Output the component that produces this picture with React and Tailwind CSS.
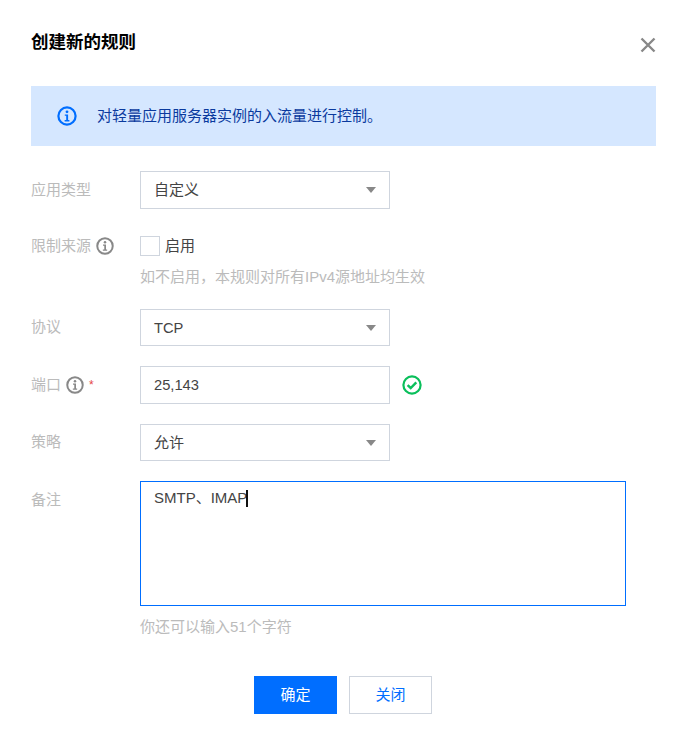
function InfoIcon ({ className }) {
  return (
    <svg className={className} viewBox="0 0 20 20" fill="none">
      <circle cx="10" cy="10" r="8.6" stroke="currentColor" strokeWidth="2.2" />
      <circle cx="10" cy="5.8" r="1.4" fill="currentColor" />
      <path d="M7.8 8.4h3.3v5.6h1.3v1.4H7.6V14h1.6V9.8H7.8z" fill="currentColor" />
    </svg>
  );
}

function Label (props) {
  return (
    <div className={`w-[109px] shrink-0 flex items-center text-[#bbbbbb] ${props.className || ''}`}>
      {props.children}
    </div>
  );
}

function Select (props) {
  return (
    <div className={`w-[250px] ${props.className} border border-[#cfd5de] flex items-center justify-between px-[13px] text-[#444444]`}>
      <span>{props.value}</span>
      <span className="w-0 h-0 border-x-[5px] border-x-transparent border-t-[6px] border-t-[#888888]" />
    </div>
  );
}

function App () {
  return (
    <div className="w-[683px] h-[741px] bg-white pl-[31px] pr-[27px] text-[15px] font-['Liberation_Sans','Noto_Sans_CJK_SC',sans-serif]">
      <div className="flex justify-between h-[86px] pt-[30px]">
        <p className="text-[17.5px] leading-[24px] font-bold text-black">创建新的规则</p>
        <svg className="w-[16px] h-[16px] mt-[7px] text-[#888888]" viewBox="0 0 16 16" fill="none">
          <path d="M1.5 1.5l13 13M14.5 1.5l-13 13" stroke="currentColor" strokeWidth="2.4" />
        </svg>
      </div>

      <div className="h-[60px] bg-[#d5e7ff] flex items-center pl-[26px] text-[#0a3a9e]">
        <InfoIcon className="w-[20px] h-[20px] text-[#006eff] mr-[20px]" />
        <span>对轻量应用服务器实例的入流量进行控制。</span>
      </div>

      <div className="mt-[25px] flex">
        <Label className="h-[38px]">应用类型</Label>
        <Select className="h-[38px]" value="自定义" />
      </div>

      <div className="mt-[27px] flex">
        <Label className="h-[20px]">
          限制来源
          <InfoIcon className="w-[18px] h-[18px] text-[#888888] ml-[5px]" />
        </Label>
        <div>
          <div className="flex items-center h-[20px] text-[#444444]">
            <span className="w-[20px] h-[20px] border border-[#cfd5de] mr-[5px]" />
            启用
          </div>
          <p className="mt-[11px] leading-[20px] text-[#bbbbbb]">如不启用，本规则对所有IPv4源地址均生效</p>
        </div>
      </div>

      <div className="mt-[22px] flex">
        <Label className="h-[36px]">协议</Label>
        <Select className="h-[37px] pt-[1px] text-[14.7px]" value="TCP" />
      </div>

      <div className="mt-[20px] flex items-center">
        <Label className="h-[38px]">
          端口
          <InfoIcon className="w-[18px] h-[18px] text-[#888888] ml-[5px]" />
          <span className="ml-[5px] text-[12px] text-[#e54545]">*</span>
        </Label>
        <div className="w-[250px] h-[38px] border border-[#cfd5de] flex items-center pl-[13px] text-[14.7px] text-[#444444]">25,143</div>
        <svg className="w-[20px] h-[20px] ml-[12px] text-[#0abf5b]" viewBox="0 0 20 20" fill="none">
          <circle cx="10" cy="10" r="8.6" stroke="currentColor" strokeWidth="2.2" />
          <path d="M5.6 10.2l3.1 2.8 5.6-5.6" stroke="currentColor" strokeWidth="2.4" />
        </svg>
      </div>

      <div className="mt-[20px] flex">
        <Label className="h-[36px]">策略</Label>
        <Select className="h-[37px] pt-[1px]" value="允许" />
      </div>

      <div className="mt-[20px] flex">
        <Label className="h-[38px]">备注</Label>
        <div>
          <div className="w-[486px] h-[125px] border border-[#006eff] pl-[13px] pt-[6px] leading-[20px] text-[#444444] flex items-start">
            <span>SMTP、IMAP</span>
            <span className="w-[2px] h-[17px] bg-[#111111] -ml-[1px] mt-[2px]" />
          </div>
          <p className="mt-[11px] leading-[20px] text-[#bbbbbb]">你还可以输入51个字符</p>
        </div>
      </div>

      <div className="mt-[39px] ml-[223px] flex gap-[12px]">
        <button className="w-[83px] h-[38px] bg-[#006eff] text-white">确定</button>
        <button className="w-[83px] h-[38px] border border-[#cfd5de] text-[#006eff]">关闭</button>
      </div>
    </div>
  );
}

export default App;
